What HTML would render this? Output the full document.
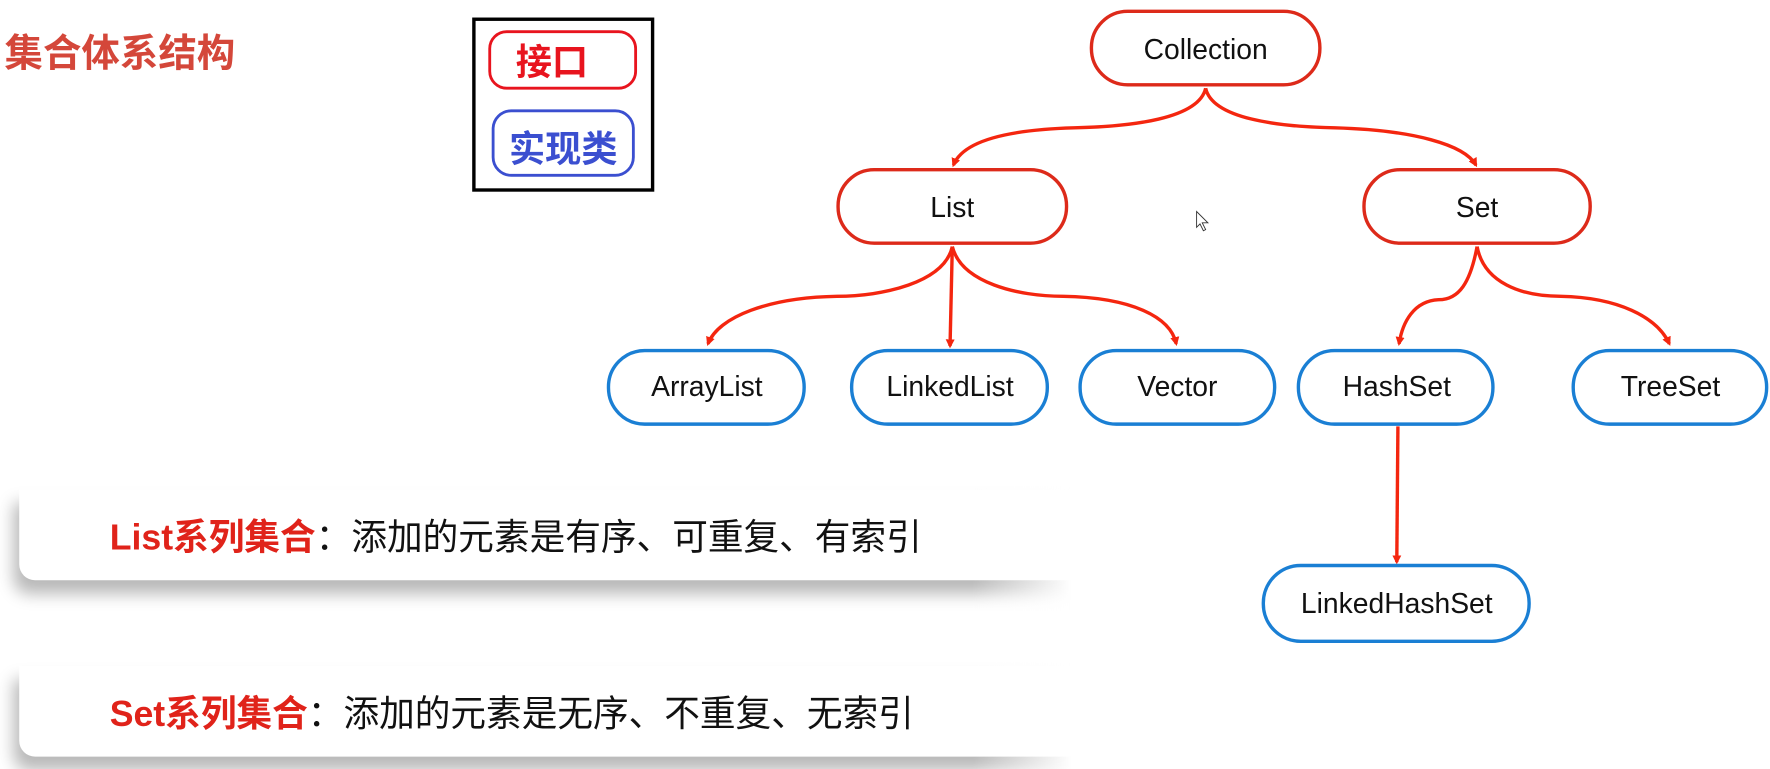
<!DOCTYPE html>
<html><head><meta charset="utf-8"><style>
html,body{margin:0;padding:0;background:#fff;width:1770px;height:757px;overflow:hidden}
#w{position:absolute;left:0;top:0;width:1565px;height:669px;transform:scale(1.131);transform-origin:0 0;font-family:"Liberation Sans","Noto Sans CJK SC",sans-serif}
.a{position:absolute}
.card{position:absolute;left:17px;width:940px;height:80px;background:#fff;border-radius:0 0 0 14px;box-shadow:-5px 12px 14px rgba(0,0,0,.28)}
.fade{position:absolute;left:860px;width:110px;background:linear-gradient(to right,rgba(255,255,255,0),#fff 80%)}
.txt{position:absolute;left:97px;font-size:32px;color:#111;font-family:"Liberation Sans","Noto Sans CJK SC",sans-serif;white-space:nowrap;transform:scaleX(.985);transform-origin:0 0}
.txt b{color:#e0231a}
svg text{font-family:"Liberation Sans","Noto Sans CJK SC",sans-serif}
</style></head><body><div id="w">
<div class="a" style="left:4px;top:20px;font-size:34px;color:#d4473a;font-weight:bold;font-family:'Noto Sans CJK SC',sans-serif">集合体系结构</div>
<div class="card" style="top:433px"></div>
<div class="card" style="top:589px"></div>
<div class="fade" style="top:425px;height:140px"></div>
<div class="fade" style="top:580px;height:100px"></div>
<div class="txt" style="top:450px"><b>List系列集合</b>：添加的元素是有序、可重复、有索引</div>
<div class="txt" style="top:606px"><b>Set系列集合</b>：添加的元素是无序、不重复、无索引</div>
<svg class="a" style="left:0;top:0" width="1565" height="669" viewBox="0 0 1565 669">
<defs><marker id="ar" markerWidth="8" markerHeight="8" refX="6" refY="4" orient="auto" markerUnits="userSpaceOnUse"><path d="M0,0 L8,4 L0,8 z" fill="#f4260f"/></marker></defs>
<rect x="419" y="17" width="158" height="151" fill="none" stroke="#000" stroke-width="3"/>
<rect x="433" y="28" width="129" height="50" rx="15" fill="#fff" stroke="#e8141e" stroke-width="2.5"/>
<text x="488" y="66" font-size="32" font-weight="bold" fill="#e8141e" text-anchor="middle">接口</text>
<rect x="436" y="98" width="124" height="57" rx="16" fill="#fff" stroke="#3b4fd0" stroke-width="2.5"/>
<text x="498" y="143" font-size="32" font-weight="bold" fill="#3b4fd0" text-anchor="middle">实现类</text>
<g fill="none" stroke="#f4260f" stroke-width="3">
<path d="M1066 78 C1060 105 1000 112 950 113 C880 115 850 128 843 146" marker-end="url(#ar)"/>
<path d="M1066 78 C1072 105 1130 112 1180 113 C1250 115 1295 128 1305 146" marker-end="url(#ar)"/>
<path d="M842 218 C835 250 780 262 740 262 C680 263 635 280 626 304" marker-end="url(#ar)"/>
<path d="M842 218 L840 306" marker-end="url(#ar)"/>
<path d="M842 218 C850 250 900 262 940 262 C1000 263 1035 280 1040 304" marker-end="url(#ar)"/>
<path d="M1306 218 C1300 250 1290 265 1272 265 C1250 266 1240 285 1237 304" marker-end="url(#ar)"/>
<path d="M1306 218 C1312 250 1345 262 1380 262 C1430 263 1465 280 1476 304" marker-end="url(#ar)"/>
<path d="M1236 377 L1235 497" marker-end="url(#ar)"/>
</g>
<g fill="#fff" stroke-width="3">
<rect x="965" y="10" width="202" height="65" rx="32" stroke="#dd2a1a"/>
<rect x="741" y="150" width="202" height="65" rx="32" stroke="#dd2a1a"/>
<rect x="1206" y="150" width="200" height="65" rx="32" stroke="#dd2a1a"/>
<rect x="538" y="310" width="173" height="65" rx="32" stroke="#1a7fd4"/>
<rect x="753" y="310" width="173" height="65" rx="32" stroke="#1a7fd4"/>
<rect x="955" y="310" width="172" height="65" rx="32" stroke="#1a7fd4"/>
<rect x="1148" y="310" width="172" height="65" rx="32" stroke="#1a7fd4"/>
<rect x="1391" y="310" width="171" height="65" rx="32" stroke="#1a7fd4"/>
<rect x="1117" y="500" width="235" height="67" rx="33" stroke="#1a7fd4"/>
</g>
<g font-size="25" fill="#111" text-anchor="middle">
<text x="1066" y="52">Collection</text>
<text x="842" y="192">List</text>
<text x="1306" y="192">Set</text>
<text x="625" y="350">ArrayList</text>
<text x="840" y="350">LinkedList</text>
<text x="1041" y="350">Vector</text>
<text x="1235" y="350">HashSet</text>
<text x="1477" y="350">TreeSet</text>
<text x="1235" y="542">LinkedHashSet</text>
</g>
<path d="M1058 187 L1058 201 L1061 198 L1064 204 L1066 203 L1063 197 L1068 197 Z" fill="#fff" stroke="#333" stroke-width="0.8"/>
</svg>
</div></body></html>
